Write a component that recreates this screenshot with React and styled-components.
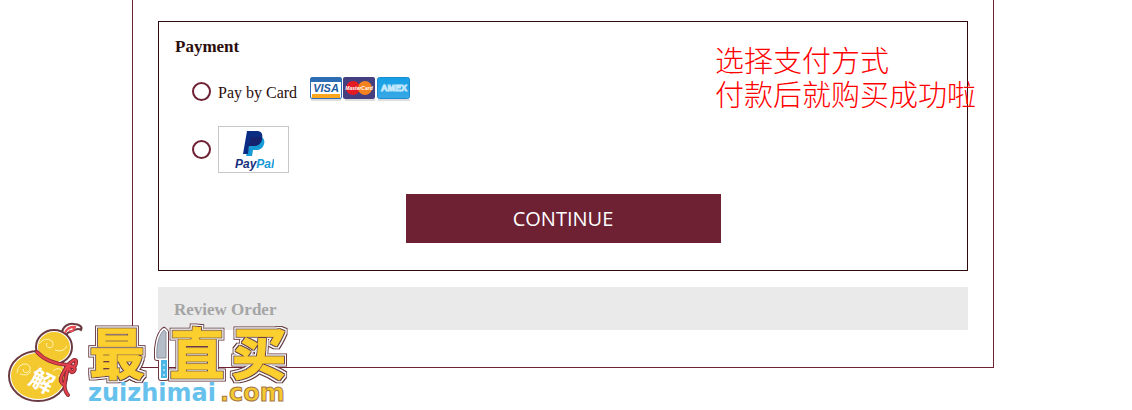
import styled, { createGlobalStyle } from "styled-components";

const GlobalStyle = createGlobalStyle`
  * {
    box-sizing: border-box;
  }

  body {
    margin: 0;
    background-color: #fff;
    color: #2b0d0d;
    font-family: "Liberation Serif", serif;
  }
`;

const Page = styled.div`
  position: relative;
  min-height: 100vh;
  padding-right: 6px;
`;

const CheckoutContainer = styled.main`
  max-width: 862px;
  margin: 0 auto;
  padding: 21px 25px 37px;
  border: solid #6d2133;
  border-width: 0 1px 1px;
`;

const PaymentSection = styled.section`
  position: relative;
  padding: 15px 16px 27px;
  border: 1px solid #2e0a0c;
`;

const SectionTitle = styled.h2`
  margin: 0;
  color: ${(props) => (props.$disabled ? "#a5a5a5" : "#2b0d0d")};
  font-size: 17px;
  font-weight: 700;
  line-height: 20px;
`;

const PaymentForm = styled.form`
  display: flex;
  flex-direction: column;
  gap: 21px;
  margin-top: 20px;
`;

const OptionRow = styled.div`
  display: flex;
  align-items: center;
  gap: 7px;
  min-height: 28px;
  padding-left: 17px;
`;

const Radio = styled.input`
  appearance: none;
  width: 19px;
  height: 19px;
  margin: 0;
  border: 2px solid #6d2133;
  border-radius: 50%;
  background-color: #fff;
  cursor: pointer;

  &:checked {
    background-color: #6d2133;
    box-shadow: inset 0 0 0 3px #fff;
  }
`;

const CardLabel = styled.label`
  display: flex;
  align-items: flex-end;
  gap: 13px;
  font-size: 16px;
  line-height: 24px;
`;

const CardIcons = styled.svg`
  display: block;
  margin-bottom: 4px;
`;

const PayPalLabel = styled.label`
  display: flex;
  justify-content: center;
  width: 71px;
  height: 47px;
  border: 1px solid #c8c8c8;
  cursor: pointer;
`;

const ContinueButton = styled.button`
  align-self: center;
  width: 100%;
  max-width: 315px;
  height: 49px;
  border: 0;
  background-color: #6d2133;
  color: #fff;
  font-family: "Open Sans", sans-serif;
  font-size: 20px;
  cursor: pointer;
`;

const Note = styled.p`
  position: absolute;
  top: 20px;
  right: -9px;
  margin: 0;
  color: #f00;
  font-family: "Noto Sans CJK SC", sans-serif;
  font-size: 29px;
  font-weight: 300;
  line-height: 34px;
  white-space: nowrap;
`;

const ReviewSection = styled.section`
  margin-top: 16px;
  padding: 13px 16px 10px;
  background-color: #eaeaea;
`;

const Watermark = styled.svg`
  position: absolute;
  left: 0;
  bottom: 3px;
`;

const HanText = styled.text`
  font-family: "Noto Sans CJK SC", sans-serif;
  font-size: ${(props) => props.$size}px;
  font-weight: 700;
`;

const LatinText = styled.text`
  font-family: "DejaVu Sans", sans-serif;
  font-size: 24px;
  font-weight: ${(props) => props.$weight};
`;

const MarkText = styled.text`
  font-family: "Liberation Sans", sans-serif;
  font-size: ${(props) => props.$size}px;
  font-style: ${(props) => (props.$italic ? "italic" : "normal")};
  font-weight: 700;
`;

const Cards = () => (
  <CardIcons width="101" height="24" viewBox="0 0 101 24" aria-hidden="true">
    <defs>
      <linearGradient id="amex" x1="0" y1="0" x2="0" y2="1">
        <stop offset="0" stopColor="#149fe6" />
        <stop offset="1" stopColor="#39a8e6" />
      </linearGradient>
    </defs>
    <path d="M1 23h30M35 23h30M68 23h32" stroke="#bdbdbd" strokeWidth="1" />
    <rect x="0.5" y="0.5" width="31" height="21" rx="1.5" fill="#fff" stroke="#2d6db3" />
    <path d="M1 1h30v4H1z" fill="#2d6db3" />
    <path d="M2 17h28v4H2z" fill="#fba61c" />
    <MarkText x="16" y="15" textAnchor="middle" $size={11} $italic fill="#1d5a9f">
      VISA
    </MarkText>
    <rect x="33" y="0" width="32" height="22" rx="2" fill="#44407f" />
    <circle cx="43" cy="11" r="7" fill="#e51b23" />
    <circle cx="55" cy="11" r="7" fill="#f58220" />
    <MarkText x="49" y="13" textAnchor="middle" $size={5} $italic fill="#fff">
      MasterCard
    </MarkText>
    <rect x="67.5" y="0.5" width="32" height="21" rx="2" fill="url(#amex)" stroke="#1e8bd0" />
    <MarkText
      x="84"
      y="14"
      textAnchor="middle"
      $size={9}
      fill="#4eb2e8"
      stroke="#c4e8fb"
      strokeWidth="1"
    >
      AMEX
    </MarkText>
  </CardIcons>
);

const PayPalLogo = () => (
  <svg width="40" height="45" viewBox="0 0 40 45" role="img" aria-label="PayPal">
    <path
      d="M18 10h9c3 1 4 4 3 7-1 4-4 6-8 6h-3l-1 6h-6z"
      fill="#179bd7"
    />
    <path d="M13 4h10c5 0 6 4 5 8-1 5-4 7-9 7h-4l-1 8H9z" fill="#0a2d83" />
    <path d="M17 10h8q2 0 3 1c0 5-4 8-9 8h-4z" fill="#16226b" />
    <MarkText x="1" y="41" $size={12} $italic fill="#16307d">
      Pay
      <tspan fill="#179bd7">Pal</tspan>
    </MarkText>
  </svg>
);

const HAN_GLYPHS = [
  { char: "最", x: 117 },
  { char: "直", x: 197 },
  { char: "买", x: 259 },
];

const ZuizhimaiLogo = () => (
  <Watermark width="300" height="92" viewBox="0 315 300 92" role="img" aria-label="最值买 zuizhimai.com">
    <defs>
      {/* dark line, white band, dark line around the letters */}
      <filter id="outline" filterUnits="userSpaceOnUse" x="70" y="315" width="230" height="92">
        <feMorphology in="SourceAlpha" operator="dilate" radius="1" result="inner" />
        <feMorphology in="SourceAlpha" operator="dilate" radius="2" result="band" />
        <feMorphology in="SourceAlpha" operator="dilate" radius="3" result="outer" />
        <feFlood floodColor="#6a3a42" result="dark" />
        <feFlood floodColor="#fff" result="white" />
        <feComposite in="dark" in2="outer" operator="in" result="outerLine" />
        <feComposite in="white" in2="band" operator="in" result="whiteBand" />
        <feComposite in="dark" in2="inner" operator="in" result="innerLine" />
        <feMerge>
          <feMergeNode in="outerLine" />
          <feMergeNode in="whiteBand" />
          <feMergeNode in="innerLine" />
          <feMergeNode in="SourceGraphic" />
        </feMerge>
      </filter>
    </defs>
    {/* gourd */}
    <g fill="#fff" stroke="#6a3a42" strokeWidth="2">
      <path d="M62 334c0-8 7-11 12-10 5 0 9 3 7 6-4-3-8 1-11 2-2 0-3 1-4 4z" />
      <ellipse cx="38" cy="376" rx="29" ry="25" />
      <ellipse cx="54" cy="347" rx="18" ry="17" />
    </g>
    <path d="M65 333c2-5 6-7 11-6M69 331q5 1 5-3q-3-2-5 1" fill="none" stroke="#e94b52" strokeWidth="2" />
    <ellipse cx="38" cy="376" rx="27" ry="23" fill="#f4c92f" />
    <ellipse cx="54" cy="347" rx="16" ry="15" fill="#f4c92f" />
    <g fill="none" stroke="#fff3b0" strokeWidth="1">
      <path d="M39 344q6-8 13-3q3 5-2 7q-5-1-3-5M55 350q8 3 12-4M17 373q1-10 10-9q6 4 1 8q-5 2-5-3M20 374q8 3 11-3M53 371q6-5 9 0q1 5-4 5" />
    </g>
    <g fill="none" strokeLinecap="round">
      <path
        d="M37 352c8 9 18 12 31 13M68 365q9-9 8-2t-8 2q9 2 6 6t-6-6M67 366c-6 11-9 14-3 19M68 367c-1 9-7 20 0 28"
        stroke="#8a2c38"
        strokeWidth="4"
      />
      <path
        d="M37 352c8 9 18 12 31 13M68 365q9-9 8-2t-8 2q9 2 6 6t-6-6M67 366c-6 11-9 14-3 19M68 367c-1 9-7 20 0 28"
        stroke="#e5414a"
        strokeWidth="2"
      />
    </g>
    <g transform="rotate(28 42 381)">
      <HanText x="42" y="390" textAnchor="middle" $size={24} fill="#fff">
        解
      </HanText>
    </g>
    <g filter="url(#outline)" fill="#fbcf2e" stroke="#fbcf2e" strokeWidth="1">
      {HAN_GLYPHS.map((glyph) => (
        <HanText key={glyph.char} x={glyph.x} y="374" textAnchor="middle" $size={55}>
          {glyph.char}
        </HanText>
      ))}
    </g>
    {/* knife */}
    <g strokeLinejoin="round">
      <path d="M164 330c-5 4-8 16-7 28h4v20h5v-46z" fill="#6a3a42" stroke="#6a3a42" strokeWidth="6" />
      <path d="M164 330c-5 4-8 16-7 28h4v20h5v-46z" fill="#fff" stroke="#fff" strokeWidth="4" />
      <path d="M164 330c-5 4-8 16-7 28h9v-26z" fill="#b4bcc8" stroke="#8d929e" strokeWidth="1" />
    </g>
    <path d="M161 360h6v18h-6z" fill="#4bb5e6" />
    <path d="M164 364v2M164 369v2M164 374v2" stroke="#fff" />
    <LatinText x="88" y="401" $weight={700} fill="#66c2ec">
      zuizhimai
    </LatinText>
    <LatinText x="220" y="401" $weight={700} fill="#f4c92f" stroke="#a8784a" strokeWidth="1">
      .com
    </LatinText>
  </Watermark>
);

export default function App() {
  return (
    <>
      <GlobalStyle />
      <Page>
        <CheckoutContainer>
          <PaymentSection>
            <SectionTitle>Payment</SectionTitle>
            <PaymentForm onSubmit={(e) => e.preventDefault()}>
              <OptionRow>
                <Radio type="radio" name="payment" id="card" value="card" />
                <CardLabel htmlFor="card">
                  Pay by Card
                  <Cards />
                </CardLabel>
              </OptionRow>
              <OptionRow>
                <Radio type="radio" name="payment" id="paypal" value="paypal" />
                <PayPalLabel htmlFor="paypal">
                  <PayPalLogo />
                </PayPalLabel>
              </OptionRow>
              <ContinueButton type="submit">CONTINUE</ContinueButton>
            </PaymentForm>
            <Note>
              选择支付方式
              <br />
              付款后就购买成功啦
            </Note>
          </PaymentSection>
          <ReviewSection>
            <SectionTitle $disabled>Review Order</SectionTitle>
          </ReviewSection>
        </CheckoutContainer>
        <ZuizhimaiLogo />
      </Page>
    </>
  );
}
